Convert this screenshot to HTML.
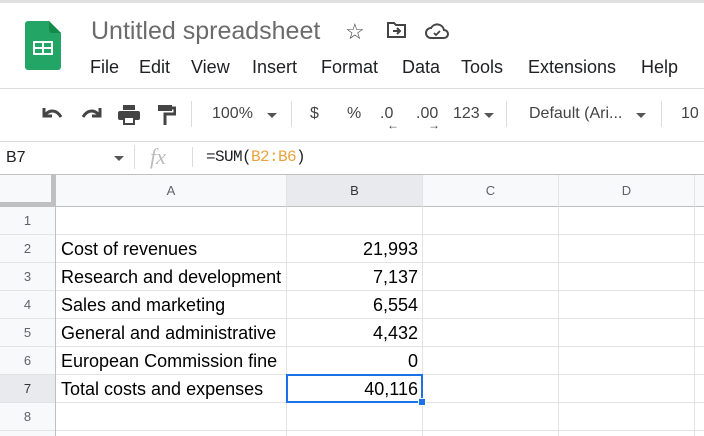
<!DOCTYPE html>
<html><head><meta charset="utf-8"><style>
*{margin:0;padding:0;box-sizing:border-box}
html,body{width:704px;height:436px;overflow:hidden}
body{background:#fff;font-family:"Liberation Sans",Arial,sans-serif;position:relative;color:#202124}
.a{position:absolute;white-space:nowrap}
.menu{font-size:18px;color:#202124;top:57px}
.tb{font-size:16px;color:#444;top:105px}
.cell{position:absolute;font-size:18px;color:#000;height:28px;line-height:28px}
.rh{position:absolute;left:0;width:55px;text-align:center;font-size:13px;color:#5f6368;height:28px;line-height:28px;background:#f8f9fa}
.ch{position:absolute;top:175px;height:31px;line-height:31px;text-align:center;font-size:13px;color:#5f6368;background:#f8f9fa}
</style></head><body>
<div class="a" style="left:0;top:0;width:704px;height:3px;background:#e0e0e0"></div>
<svg class="a" style="left:25px;top:21px" width="36" height="49" viewBox="0 0 36 49">
<path d="M3 0H24L36 12V46a3 3 0 0 1-3 3H3a3 3 0 0 1-3-3V3a3 3 0 0 1 3-3z" fill="#23a566"/>
<path d="M24 0L36 12H27a3 3 0 0 1-3-3z" fill="#138a4a"/>
<rect x="8" y="20" width="20" height="14" fill="#fff"/>
<rect x="10" y="22" width="7" height="4" fill="#23a566"/><rect x="19" y="22" width="7" height="4" fill="#23a566"/>
<rect x="10" y="28" width="7" height="4" fill="#23a566"/><rect x="19" y="28" width="7" height="4" fill="#23a566"/>
</svg>
<div class="a" style="left:91px;top:17px;font-size:25px;color:#6b6b6b">Untitled spreadsheet</div>
<div class="a" style="left:345px;top:19px;font-size:22px;color:#444">☆</div>
<svg class="a" style="left:386px;top:21px" width="22" height="18" viewBox="0 0 22 18"><path d="M2 2h6l2 2h9v12H2z" fill="none" stroke="#444" stroke-width="2"/><path d="M7 10h7M11 7l3 3-3 3" fill="none" stroke="#444" stroke-width="2"/></svg>
<svg class="a" style="left:425px;top:22px" width="24" height="18" viewBox="0 0 24 18"><path d="M6 16a5 5 0 0 1 0-10 7 7 0 0 1 13 2 4 4 0 0 1 0 8z" fill="none" stroke="#444" stroke-width="2"/><path d="M9 11l2 2 4-4" fill="none" stroke="#444" stroke-width="1.8"/></svg>
<div class="a menu" style="left:90px">File</div>
<div class="a menu" style="left:139px">Edit</div>
<div class="a menu" style="left:191px">View</div>
<div class="a menu" style="left:252px">Insert</div>
<div class="a menu" style="left:321px">Format</div>
<div class="a menu" style="left:402px">Data</div>
<div class="a menu" style="left:461px">Tools</div>
<div class="a menu" style="left:528px">Extensions</div>
<div class="a menu" style="left:641px">Help</div>
<div class="a" style="left:0;top:88px;width:704px;height:1px;background:#dadce0"></div>
<svg class="a" style="left:40px;top:106px" width="24" height="16" viewBox="0 0 24 16"><path d="M4 2v8h8" fill="none" stroke="#444" stroke-width="3"/><path d="M5 9c5-6 12-5 16 2" fill="none" stroke="#444" stroke-width="3"/></svg>
<svg class="a" style="left:80px;top:106px" width="24" height="16" viewBox="0 0 24 16"><path d="M20 2v8h-8" fill="none" stroke="#444" stroke-width="3"/><path d="M19 9c-5-6-12-5-16 2" fill="none" stroke="#444" stroke-width="3"/></svg>
<svg class="a" style="left:117px;top:105px" width="24" height="20" viewBox="0 0 24 20"><rect x="6" y="0" width="12" height="5" fill="#444"/><rect x="1" y="6" width="22" height="9" rx="2" fill="#444"/><rect x="6" y="12" width="12" height="8" fill="#444"/><rect x="8" y="13" width="8" height="5" fill="#fff"/></svg>
<svg class="a" style="left:156px;top:105px" width="20" height="20" viewBox="0 0 20 20"><rect x="2" y="0" width="14" height="6" fill="#444"/><path d="M16 3h3v6H9v11" fill="none" stroke="#444" stroke-width="3"/></svg>
<div class="a" style="left:191px;top:101px;width:1px;height:26px;background:#dadce0"></div>
<div class="a tb" style="left:212px">100%</div>
<div class="a" style="left:267px;top:113px;border:5px solid transparent;border-top:5px solid #555"></div>
<div class="a" style="left:291px;top:101px;width:1px;height:26px;background:#dadce0"></div>
<div class="a tb" style="left:310px">$</div>
<div class="a tb" style="left:347px">%</div>
<div class="a tb" style="left:380px">.0</div>
<div class="a" style="left:387px;top:118px;font-size:12px;color:#444;font-weight:bold">←</div>
<div class="a tb" style="left:416px">.00</div>
<div class="a" style="left:428px;top:118px;font-size:12px;color:#444;font-weight:bold">→</div>
<div class="a tb" style="left:453px">123</div>
<div class="a" style="left:484px;top:113px;border:5px solid transparent;border-top:5px solid #555"></div>
<div class="a" style="left:506px;top:101px;width:1px;height:26px;background:#dadce0"></div>
<div class="a tb" style="left:529px">Default (Ari...</div>
<div class="a" style="left:636px;top:113px;border:5px solid transparent;border-top:5px solid #555"></div>
<div class="a" style="left:661px;top:101px;width:1px;height:26px;background:#dadce0"></div>
<div class="a tb" style="left:681px">10</div>
<div class="a" style="left:0;top:141px;width:704px;height:1px;background:#dadce0"></div>
<div class="a" style="left:6px;top:149px;font-size:16px;color:#202124">B7</div>
<div class="a" style="left:114px;top:156px;border:5px solid transparent;border-top:5px solid #555"></div>
<div class="a" style="left:134px;top:145px;width:1px;height:24px;background:#dadce0"></div>
<div class="a" style="left:150px;top:144px;font-size:22px;color:#bbb;font-family:'Liberation Serif',serif;font-style:italic">fx</div>
<div class="a" style="left:192px;top:147px;width:1px;height:20px;background:#dadce0"></div>
<div class="a" style="left:206px;top:148px;font-size:16px;font-family:'Liberation Mono','DejaVu Sans Mono',monospace;color:#202124;letter-spacing:-0.6px">=SUM(<span style="color:#e8a33d">B2:B6</span>)</div>
<div class="a" style="left:0;top:174px;width:704px;height:1px;background:#c0c0c0"></div>
<div class="a" style="left:0;top:175px;width:55px;height:31px;background:#f8f9fa"></div>
<div class="ch" style="left:56px;width:230px">A</div>
<div class="ch" style="left:287px;width:135px;background:#e8eaed;color:#333">B</div>
<div class="ch" style="left:423px;width:135px">C</div>
<div class="ch" style="left:559px;width:135px">D</div>
<div class="ch" style="left:695px;width:9px"></div>
<div class="a" style="left:0;top:206px;width:704px;height:1px;background:#c0c0c0"></div>
<div class="a" style="left:0;top:202px;width:55px;height:4px;background:#c0c0c0"></div>
<div class="a" style="left:51px;top:175px;width:4px;height:31px;background:#c0c0c0"></div>
<div class="rh" style="top:207px">1</div>
<div class="rh" style="top:235px">2</div>
<div class="rh" style="top:263px">3</div>
<div class="rh" style="top:291px">4</div>
<div class="rh" style="top:319px">5</div>
<div class="rh" style="top:347px">6</div>
<div class="rh" style="top:375px;background:#e8eaed;color:#333">7</div>
<div class="rh" style="top:403px">8</div>
<div class="rh" style="top:431px;height:5px"></div>
<div class="a" style="left:0;top:234px;width:704px;height:1px;background:#e2e3e3"></div>
<div class="a" style="left:0;top:262px;width:704px;height:1px;background:#e2e3e3"></div>
<div class="a" style="left:0;top:290px;width:704px;height:1px;background:#e2e3e3"></div>
<div class="a" style="left:0;top:318px;width:704px;height:1px;background:#e2e3e3"></div>
<div class="a" style="left:0;top:346px;width:704px;height:1px;background:#e2e3e3"></div>
<div class="a" style="left:0;top:374px;width:704px;height:1px;background:#e2e3e3"></div>
<div class="a" style="left:0;top:402px;width:704px;height:1px;background:#e2e3e3"></div>
<div class="a" style="left:0;top:430px;width:704px;height:1px;background:#e2e3e3"></div>
<div class="a" style="left:55px;top:175px;width:1px;height:261px;background:#c0c0c0"></div>
<div class="a" style="left:286px;top:175px;width:1px;height:261px;background:#e2e3e3"></div>
<div class="a" style="left:422px;top:175px;width:1px;height:261px;background:#e2e3e3"></div>
<div class="a" style="left:558px;top:175px;width:1px;height:261px;background:#e2e3e3"></div>
<div class="a" style="left:694px;top:175px;width:1px;height:261px;background:#e2e3e3"></div>
<div class="cell" style="left:61px;top:235px">Cost of revenues</div>
<div class="cell" style="left:61px;top:263px">Research and development</div>
<div class="cell" style="left:61px;top:291px">Sales and marketing</div>
<div class="cell" style="left:61px;top:319px">General and administrative</div>
<div class="cell" style="left:61px;top:347px">European Commission fine</div>
<div class="cell" style="left:61px;top:375px">Total costs and expenses</div>
<div class="cell" style="left:287px;width:131px;text-align:right;top:235px">21,993</div>
<div class="cell" style="left:287px;width:131px;text-align:right;top:263px">7,137</div>
<div class="cell" style="left:287px;width:131px;text-align:right;top:291px">6,554</div>
<div class="cell" style="left:287px;width:131px;text-align:right;top:319px">4,432</div>
<div class="cell" style="left:287px;width:131px;text-align:right;top:347px">0</div>
<div class="cell" style="left:287px;width:131px;text-align:right;top:375px">40,116</div>
<div class="a" style="left:286px;top:374px;width:137px;height:29px;border:2px solid #1a73e8"></div>
<div class="a" style="left:418px;top:398px;width:8px;height:8px;background:#1a73e8;border:1px solid #fff"></div>
</body></html>
